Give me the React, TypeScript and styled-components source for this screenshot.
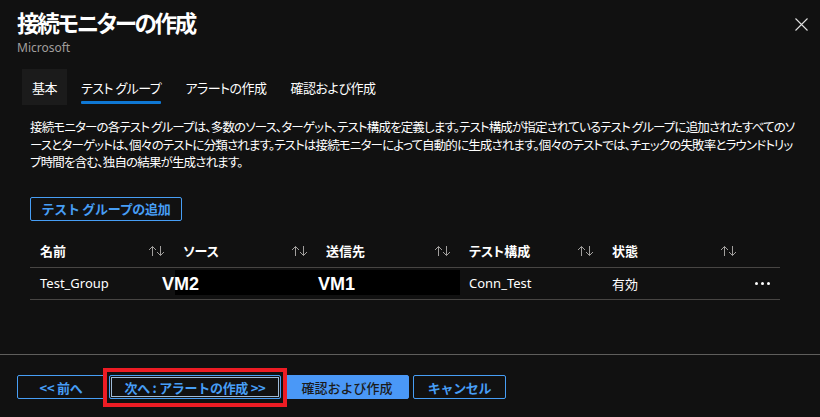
import React from "react";
import styled, { createGlobalStyle } from "styled-components";

const Global = createGlobalStyle`
  html, body { margin: 0; padding: 0; background: #111111; }
  body {
    font-family: "Noto Sans", "Noto Sans CJK JP", sans-serif;
    color: #ffffff;
    font-feature-settings: "palt";
  }
  * { box-sizing: border-box; }
`;

const Page = styled.div`
  width: 820px;
  height: 417px;
  background: #111111;
  display: flex;
  flex-direction: column;
  overflow: hidden;
`;

const Header = styled.div`
  display: flex;
  justify-content: space-between;
  align-items: flex-start;
  padding: 6px 11px 0 17px;
`;

const TitleBlock = styled.div`
  display: flex;
  flex-direction: column;
`;

const Title = styled.h1`
  margin: 0;
  font-size: 22.5px;
  line-height: 32px;
  font-weight: 700;
  color: #ffffff;
  font-family: "Noto Sans CJK JP", sans-serif;
  letter-spacing: -2.2px;
`;

const Subtitle = styled.div`
  font-size: 12px;
  line-height: 16px;
  color: #a19f9d;
  margin-top: 2px;
`;

const CloseButton = styled.button`
  width: 16px;
  height: 16px;
  margin-top: 10px;
  padding: 0;
  background: none;
  border: none;
  display: flex;
  align-items: center;
  justify-content: center;
  svg { display: block; }
`;

const TabList = styled.div`
  display: flex;
  gap: 4px;
  padding-left: 22px;
  margin-top: 13px;
`;

const Tab = styled.div<{ $active?: boolean; $hover?: boolean }>`
  position: relative;
  height: 36px;
  padding: 0 10px;
  display: flex;
  align-items: center;
  font-size: 13px;
  font-family: "Noto Sans CJK JP", sans-serif;
  letter-spacing: -0.5px;
  color: #ffffff;
  background: ${(p) => (p.$hover ? "#1b1b1b" : "transparent")};
  &::after {
    content: "";
    position: absolute;
    left: 10px;
    right: 10px;
    bottom: 1px;
    height: 3px;
    border-radius: 1px;
    background: ${(p) => (p.$active ? "#0f78d4" : "transparent")};
  }
`;

const Content = styled.div`
  padding: 13px 30px 0 30px;
  flex: 1;
`;

const Description = styled.div`
  font-size: 12.5px;
  line-height: 17.5px;
  font-family: "Noto Sans CJK JP", sans-serif;
  color: #ffffff;
  letter-spacing: -0.85px;
`;

const Line = styled.div`
  white-space: nowrap;
`;

const OutlineButton = styled.button<{ $focused?: boolean; $w: number }>`
  width: ${(p) => p.$w}px;
  height: 24px;
  border: 1px solid #479ef5;
  border-radius: 2px;
  background: #111111;
  color: #479ef5;
  font-family: "Noto Sans CJK JP", sans-serif;
  font-weight: 600;
  font-size: 13px;
  letter-spacing: -0.3px;
  padding: 0;
  display: flex;
  align-items: center;
  justify-content: center;
  box-shadow: ${(p) => (p.$focused ? "inset 0 0 0 1px #111111, inset 0 0 0 2px #9fbbd8" : "none")};
`;

const PrimaryButton = styled.button<{ $w: number }>`
  width: ${(p) => p.$w}px;
  height: 24px;
  border: 1px solid #4a98f7;
  border-radius: 2px;
  background: #4a98f7;
  color: #1b1b1b;
  font-family: "Noto Sans CJK JP", sans-serif;
  font-size: 13px;
  font-weight: 500;
  padding: 0;
`;

const AddRow = styled.div`
  margin-top: 26px;
`;

const Table = styled.div`
  margin-top: 14px;
  width: 750px;
`;

const Grid = styled.div<{ $header?: boolean }>`
  position: relative;
  display: grid;
  grid-template-columns: 143px 143px 143px 143px 143px 35px;
  height: ${(p) => (p.$header ? 33 : 32)}px;
  border-bottom: 1px solid #484644;
  align-items: center;
`;

const HeadCell = styled.div`
  display: flex;
  align-items: center;
  justify-content: space-between;
  padding: 0 7px 0 10px;
  font-size: 13px;
  font-weight: 700;
  font-family: "Noto Sans CJK JP", sans-serif;
  color: #ffffff;
`;

const SortIcon = styled.span`
  display: flex;
  svg { display: block; }
`;

const Cell = styled.div`
  padding: 0 10px;
  font-size: 13px;
  color: #ffffff;
  white-space: nowrap;
`;

const More = styled.div`
  display: flex;
  justify-content: flex-end;
  gap: 3px;
  padding-right: 10px;
  span {
    width: 3px;
    height: 3px;
    border-radius: 50%;
    background: #ffffff;
  }
`;

const Redaction = styled.div`
  position: absolute;
  left: 145px;
  top: 2px;
  width: 285px;
  height: 25px;
  background: #000000;
`;

const RedactLabel = styled.div<{ $x: number }>`
  position: absolute;
  left: ${(p) => p.$x}px;
  top: 6px;
  font-family: "Liberation Sans", Arial, sans-serif;
  font-weight: 700;
  font-size: 18px;
  line-height: 20px;
  color: #ffffff;
`;

const Footer = styled.div`
  border-top: 1px solid #5f5e5c;
  height: 63px;
  padding: 20px 17px 0 17px;
  display: flex;
  align-items: flex-start;
  gap: 4px;
`;

const Highlight = styled.div`
  position: relative;
  &::before {
    content: "";
    position: absolute;
    left: -6px;
    right: -6px;
    top: -7px;
    bottom: -8px;
    border: 4px solid #ed1c24;
    pointer-events: none;
  }
`;

const Sort = () => (
  <SortIcon>
    <svg width="18" height="12" viewBox="0 0 18 12" fill="none" stroke="#a19f9d" strokeWidth="1">
      <path d="M4.5 11V1.5M1 5L4.5 1.5L8 5" />
      <path d="M12.5 1V10.5M9 7L12.5 10.5L16 7" />
    </svg>
  </SortIcon>
);

const columns = ["名前", "ソース", "送信先", "テスト構成", "状態"];

export default function App() {
  return (
    <Page>
      <Global />
      <Header>
        <TitleBlock>
          <Title>接続モニターの作成</Title>
          <Subtitle>Microsoft</Subtitle>
        </TitleBlock>
        <CloseButton aria-label="閉じる">
          <svg width="13" height="13" viewBox="0 0 13 13" stroke="#e0e0e0" strokeWidth="1.1">
            <path d="M0.5 0.5L12.5 12.5M12.5 0.5L0.5 12.5" />
          </svg>
        </CloseButton>
      </Header>
      <TabList>
        <Tab $hover>基本</Tab>
        <Tab $active>テスト グループ</Tab>
        <Tab>アラートの作成</Tab>
        <Tab>確認および作成</Tab>
      </TabList>
      <Content>
        <Description>
          <Line>接続モニターの各テスト グループは、多数のソース、ターゲット、テスト構成を定義します。テスト構成が指定されているテスト グループに追加されたすべてのソ</Line>
          <Line>ースとターゲットは、個々のテストに分類されます。テストは接続モニターによって自動的に生成されます。個々のテストでは、チェックの失敗率とラウンドトリッ</Line>
          <Line>プ時間を含む、独自の結果が生成されます。</Line>
        </Description>
        <AddRow>
          <OutlineButton $w={152}>テスト グループの追加</OutlineButton>
        </AddRow>
        <Table>
          <Grid $header>
            {columns.map((c) => (
              <HeadCell key={c}>
                <span>{c}</span>
                <Sort />
              </HeadCell>
            ))}
            <div />
          </Grid>
          <Grid>
            <Cell>Test_Group</Cell>
            <Cell />
            <Cell />
            <Cell>Conn_Test</Cell>
            <Cell>有効</Cell>
            <More>
              <span />
              <span />
              <span />
            </More>
            <Redaction />
            <RedactLabel $x={132}>VM2</RedactLabel>
            <RedactLabel $x={288}>VM1</RedactLabel>
          </Grid>
        </Table>
      </Content>
      <Footer>
        <OutlineButton $w={88}>&lt;&lt; 前へ</OutlineButton>
        <Highlight>
          <OutlineButton $w={172} $focused>次へ : アラートの作成 &gt;&gt;</OutlineButton>
        </Highlight>
        <PrimaryButton $w={124}>確認および作成</PrimaryButton>
        <OutlineButton $w={93}>キャンセル</OutlineButton>
      </Footer>
    </Page>
  );
}
